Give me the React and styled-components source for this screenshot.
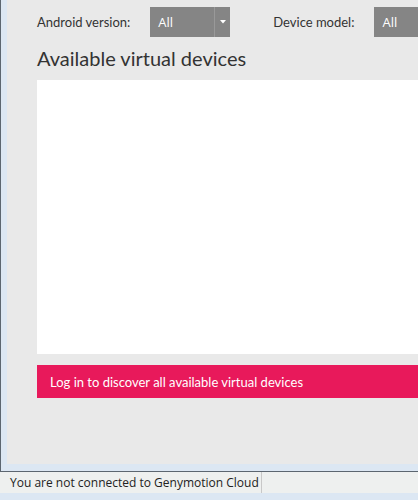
import React from 'react';
import styled, { createGlobalStyle } from 'styled-components';

const GlobalStyle = createGlobalStyle`
  html, body {
    margin: 0;
    padding: 0;
    background: #dce7f3;
  }
`;

const Window = styled.div`
  width: 418px;
  height: 500px;
  display: flex;
  flex-direction: column;
  overflow: hidden;
  background: #dce7f3;
`;

const Frame = styled.div`
  height: 471px;
  box-sizing: border-box;
  border-left: 1px solid #5c6670;
  padding: 0 0 7px 6px;
  display: flex;
`;

const Content = styled.main`
  flex: 1;
  background: #e9e9e9;
  padding: 7px 0 0 30px;
  display: flex;
  flex-direction: column;
  font-family: Lato, 'Noto Sans', sans-serif;
  color: #333;
  min-width: 0;
`;

const Toolbar = styled.div`
  display: flex;
  align-items: center;
  height: 30px;
  white-space: nowrap;
`;

const Label = styled.span`
  font-size: 13px;
  margin-right: ${(p) => p.$gap}px;
`;

const Select = styled.div`
  display: flex;
  align-items: stretch;
  width: ${(p) => p.$width}px;
  height: 30px;
  flex-shrink: 0;
  background: #858585;
  color: #fff;
  font-family: 'Open Sans', 'Liberation Sans', sans-serif;
  font-size: 13px;
  margin-right: ${(p) => p.$after || 0}px;
`;

const SelectValue = styled.span`
  flex: 1;
  display: flex;
  align-items: center;
  padding-left: 8px;
`;

const Caret = styled.span`
  width: 15px;
  border-left: 1px solid #999;
  display: flex;
  align-items: center;
  justify-content: center;
`;

const Heading = styled.h2`
  margin: 8px 0 0;
  font-size: 20px;
  font-weight: 400;
  line-height: 26px;
  height: 35px;
`;

const DeviceList = styled.div`
  height: 274px;
  background: #fff;
`;

const LoginBar = styled.div`
  margin-top: 11px;
  height: 33px;
  background: #e8195b;
  color: #fff;
  font-size: 13px;
  display: flex;
  align-items: center;
  padding-left: 13px;
`;

const StatusBar = styled.footer`
  border-top: 1px solid #5c6670;
  height: 21px;
  background: #eef0ef;
  display: flex;
  align-items: stretch;
`;

const StatusText = styled.span`
  padding: 0 2px 0 10px;
  border-right: 1px solid #c8c8c8;
  font-family: 'Open Sans', 'Liberation Sans', sans-serif;
  font-size: 12px;
  color: #222;
  display: flex;
  align-items: center;
`;

const App = () => (
  <>
    <GlobalStyle />
    <Window>
      <Frame>
        <Content>
          <Toolbar>
            <Label $gap={20}>Android version:</Label>
            <Select $width={80} $after={43}>
              <SelectValue>All</SelectValue>
              <Caret>
                <svg width="6" height="4" viewBox="0 0 6 4">
                  <path d="M0 0h6L3 3.5z" fill="#fff" />
                </svg>
              </Caret>
            </Select>
            <Label $gap={20}>Device model:</Label>
            <Select $width={80}>
              <SelectValue>All</SelectValue>
            </Select>
          </Toolbar>
          <Heading>Available virtual devices</Heading>
          <DeviceList />
          <LoginBar>Log in to discover all available virtual devices</LoginBar>
        </Content>
      </Frame>
      <StatusBar>
        <StatusText>You are not connected to Genymotion Cloud</StatusText>
      </StatusBar>
    </Window>
  </>
);

export default App;
